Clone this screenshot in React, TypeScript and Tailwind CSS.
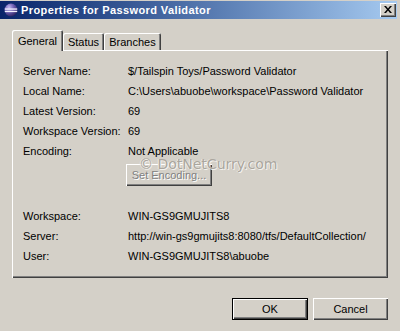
import React from "react";

const bevel =
  "shadow-[inset_1px_1px_0_#ffffff,inset_-1px_-1px_0_#404040,inset_-2px_-2px_0_#808080]";

function Row({ label, value }: { label: string; value: string }) {
  return (
    <div className="flex h-[20px] items-center whitespace-nowrap">
      <div className="w-[105px] shrink-0">{label}</div>
      <div>{value}</div>
    </div>
  );
}

export default function App() {
  return (
    <div className="relative w-[400px] h-[331px] overflow-hidden bg-[#d4d0c8] text-[11px] leading-[13px] text-black font-['Liberation_Sans',Arial,sans-serif]">
      {/* Title bar */}
      <div className="mt-[1px] mr-[3px] h-[18px] flex items-center bg-linear-to-r from-[#0a246a] to-[#a6caf0]">
        <svg className="ml-[4px] shrink-0" width="14" height="14" viewBox="0 0 14 14">
          <defs>
            <radialGradient id="ec" cx="35%" cy="30%" r="75%">
              <stop offset="0%" stopColor="#c2b8f0" />
              <stop offset="50%" stopColor="#6a5bb0" />
              <stop offset="100%" stopColor="#2a1f5c" />
            </radialGradient>
          </defs>
          <circle cx="7" cy="7" r="6.5" fill="url(#ec)" />
          <rect x="0.8" y="5.4" width="12.4" height="1.3" fill="#f4f2ff" />
          <rect x="0.8" y="7.8" width="12.4" height="1.3" fill="#f4f2ff" />
        </svg>
        <span className="ml-[3px] font-bold text-white whitespace-nowrap tracking-[0.4px]">
          Properties for Password Validator
        </span>
        <div
          className={`ml-auto mr-[1px] w-[16px] h-[14px] bg-[#d4d0c8] flex items-center justify-center ${bevel}`}
        >
          <svg width="8" height="7" viewBox="0 0 8 7" className="-mt-px -ml-px">
            <path d="M0 0h2l2 2.5L6 0h2L5 3.5 8 7H6L4 4.5 2 7H0l3-3.5z" fill="#000" />
          </svg>
        </div>
      </div>

      {/* Tabs */}
      <div className="mt-[11px] ml-[12px] h-[20px] flex items-end">
        <div className="relative z-10 -mb-px h-[21px] w-[51px] flex items-center justify-center pt-[2px] bg-[#d4d0c8] rounded-t-[2px] shadow-[inset_1px_1px_0_#ffffff,inset_-1px_0_0_#404040,inset_-2px_0_0_#808080]">
          General
        </div>
        <div className="h-[17px] w-[41px] flex items-center justify-center pt-[2px] rounded-t-[2px] shadow-[inset_1px_1px_0_#ffffff,inset_-1px_0_0_#404040,inset_-2px_0_0_#808080]">
          Status
        </div>
        <div className="h-[17px] w-[57px] flex items-center justify-center pt-[2px] rounded-t-[2px] shadow-[inset_1px_1px_0_#ffffff,inset_-1px_0_0_#404040,inset_-2px_0_0_#808080]">
          Branches
        </div>
      </div>

      {/* Panel */}
      <div className={`ml-[12px] w-[376px] h-[228px] pt-[11px] pl-[11px] ${bevel}`}>
        <Row label="Server Name:" value="$/Tailspin Toys/Password Validator" />
        <Row label="Local Name:" value="C:\Users\abuobe\workspace\Password Validator" />
        <Row label="Latest Version:" value="69" />
        <Row label="Workspace Version:" value="69" />
        <Row label="Encoding:" value="Not Applicable" />
        <div
          className={`mt-[3px] ml-[103px] w-[86px] h-[22px] flex items-center justify-center text-[#808080] [text-shadow:1px_1px_0_#ffffff] ${bevel}`}
        >
          Set Encoding...
        </div>
        <div className="mt-[20px]">
          <Row label="Workspace:" value="WIN-GS9GMUJITS8" />
          <Row label="Server:" value="http://win-gs9gmujits8:8080/tfs/DefaultCollection/" />
          <Row label="User:" value="WIN-GS9GMUJITS8\abuobe" />
        </div>
      </div>

      {/* Buttons */}
      <div className="mt-[20px] ml-[232px] flex gap-[5px]">
        <div className="w-[76px] h-[22px] flex items-center justify-center shadow-[inset_0_0_0_1px_#000000,inset_2px_2px_0_#ffffff,inset_-2px_-2px_0_#404040,inset_-3px_-3px_0_#808080]">
          OK
        </div>
        <div className={`w-[75px] h-[22px] flex items-center justify-center ${bevel}`}>
          Cancel
        </div>
      </div>

      {/* Watermark */}
      <div className="absolute left-[139px] top-[156px] text-[14px] leading-[16px] whitespace-nowrap text-[#aaa69e] font-['DejaVu_Sans',Verdana,sans-serif] [text-shadow:1px_1px_0_#f4f2ee,-1px_0_0_#ece9e4]">
        © DotNetCurry.com
      </div>
    </div>
  );
}
